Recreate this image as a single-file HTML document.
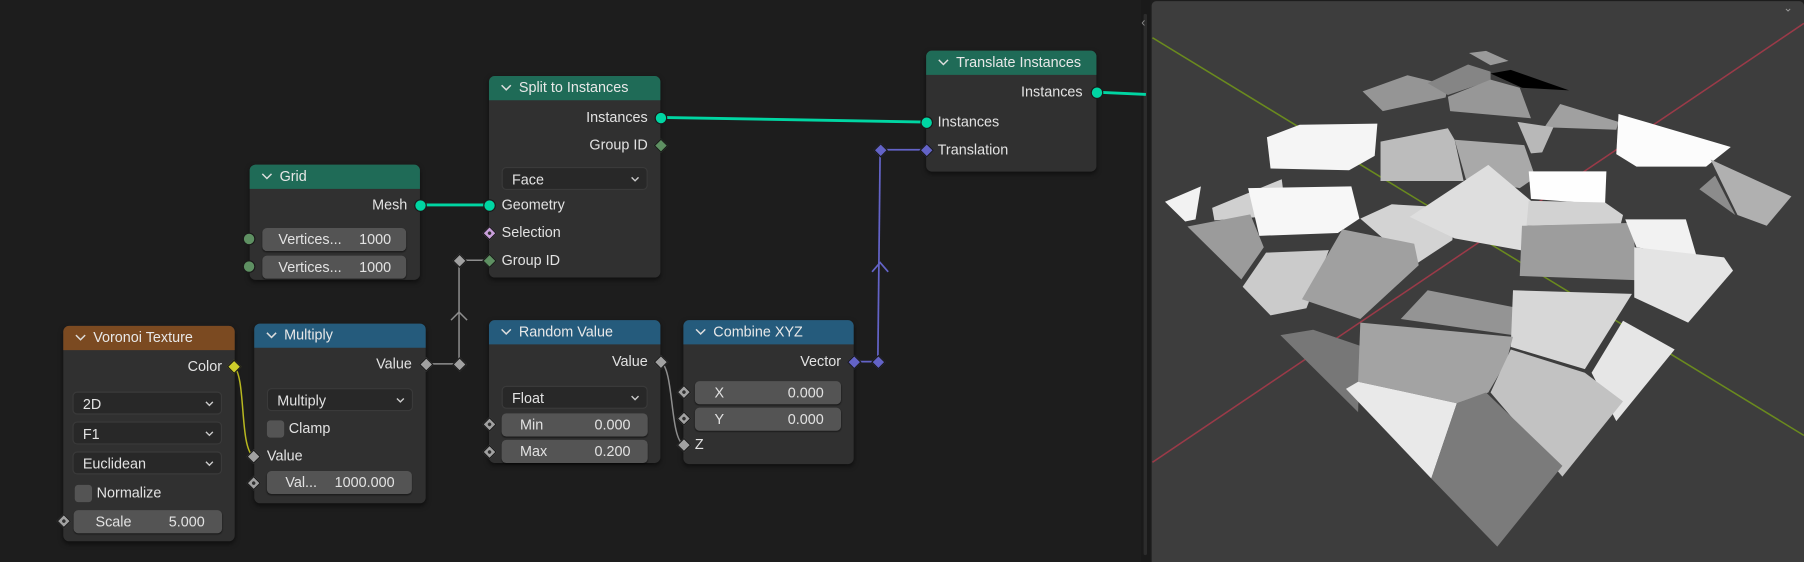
<!DOCTYPE html>
<html><head><meta charset="utf-8">
<style>
html,body{margin:0;padding:0;width:1804px;height:562px;overflow:hidden;background:#1d1d1d;}
#s{position:absolute;left:0;top:0;width:1568px;height:488px;transform:scale(1.1505,1.1516);transform-origin:0 0;font-family:"Liberation Sans",sans-serif;color:#e2e2e2;font-size:12.5px;}
.a{position:absolute;}
.node{position:absolute;background:#303030;border-radius:5px;box-shadow:0 2px 4px rgba(0,0,0,.5);}
.hdr{position:absolute;left:0;right:0;top:0;height:21px;border-radius:5px 5px 0 0;line-height:21px;padding-left:26px;font-size:12.5px;color:#e8e8e8;}
.hdr svg{position:absolute;left:10px;top:7px;}
.g{background:#1f6b57}.b{background:#255b7c}.o{background:#7b4a21}
.lab{position:absolute;height:16px;line-height:16px;white-space:nowrap;}
.r{text-align:right}
.fld{position:absolute;height:20px;line-height:20px;background:#545454;border-radius:4px;box-shadow:0 1px 1px rgba(0,0,0,.4);}
.fld span{position:absolute;top:0}
.dd{position:absolute;height:20px;line-height:20px;background:#282828;border:1px solid #3a3a3a;border-radius:4px;box-sizing:border-box;padding-left:8px;}
.dd svg{position:absolute;right:6px;top:7px;}
.cb{position:absolute;width:15px;height:15px;background:#545454;border-radius:3px;}
.sc{position:absolute;width:9px;height:9px;border-radius:50%;background:#00d6a3;border:1px solid #1a1a1a;margin:-5.5px 0 0 -5.5px;}
.dm{position:absolute;width:7px;height:7px;transform:rotate(45deg);margin:-4.5px 0 0 -4.5px;border:1px solid #1a1a1a;}
.dm.u::after{content:"";position:absolute;left:2px;top:2px;width:3px;height:3px;background:#303030;border-radius:50%;}
</style></head><body>
<div id="s">
<!-- viewport -->
<div class="a" style="left:992px;top:0;width:8px;height:488px;background:#1a1a1a"></div>
<div class="a" style="left:994px;top:12px;width:3px;height:470px;background:#2c2c2c;border-radius:2px"></div>
<div class="a" style="left:992px;top:14px;color:#888;font-size:11px">‹</div>
<div class="a" style="left:1001px;top:1px;width:567px;height:487px;background:#3d3d3d;border-radius:4px 4px 0 0"></div>
<svg class="a" style="left:956px;top:0" width="612" height="488" viewBox="0 0 1568 1568" preserveAspectRatio="none">
<line x1="117" y1="105" x2="1568" y2="1215" stroke="#6a8a1e" stroke-width="4"/>
<line x1="1568" y1="65" x2="117" y2="1290" stroke="#9a3a48" stroke-width="4"/>
<g stroke="none">
<polygon points="822,148 860,142 910,170 870,182" fill="#9a9a9a"/>
<polygon points="870,205 915,195 1045,252 940,245" fill="#000"/>
<polygon points="585,255 685,210 775,238 770,272 630,310" fill="#959595"/>
<polygon points="730,232 820,180 870,200 870,225 775,265" fill="#858585"/>
<polygon points="775,270 870,222 935,245 960,330 780,310" fill="#979797"/>
<polygon points="990,355 1025,290 1155,340 1150,362" fill="#a0a0a0"/>
<polygon points="930,340 1010,355 985,425 960,428" fill="#b8b8b8"/>
<polygon points="372,383 445,348 618,345 612,435 555,475 380,470" fill="#f5f5f5"/>
<polygon points="625,395 775,358 790,390 810,505 625,505" fill="#bcbcbc"/>
<polygon points="790,390 945,405 970,495 935,525 815,500" fill="#a9a9a9"/>
<polygon points="1155,318 1405,410 1350,465 1195,465 1150,430" fill="#fcfcfc"/>
<polygon points="1360,445 1540,548 1485,630 1420,600" fill="#b0b0b0"/>
<polygon points="1335,528 1370,490 1415,600" fill="#8c8c8c"/>
<polygon points="145,563 225,520 213,612 190,618" fill="#f2f2f2"/>
<polygon points="250,580 405,500 415,600 255,615" fill="#d0d0d0"/>
<polygon points="330,525 560,520 578,610 530,650 355,658" fill="#f7f7f7"/>
<polygon points="195,632 335,598 365,690 315,780" fill="#9b9b9b"/>
<polygon points="318,800 370,705 510,698 460,860 380,880" fill="#cbcbcb"/>
<polygon points="580,610 650,570 790,580 785,670 700,740" fill="#d3d3d3"/>
<polygon points="450,835 540,640 700,680 710,740 580,890" fill="#a0a0a0"/>
<polygon points="690,605 865,460 960,560 945,700 790,665" fill="#dedede"/>
<polygon points="955,478 1128,478 1125,570 960,555" fill="#fefefe"/>
<polygon points="955,560 1125,565 1165,600 1160,625 950,630" fill="#d2d2d2"/>
<polygon points="940,630 1185,622 1200,782 935,770" fill="#9d9d9d"/>
<polygon points="1170,612 1305,612 1330,720 1195,690" fill="#f2f2f2"/>
<polygon points="1190,690 1390,718 1410,755 1310,900 1190,830" fill="#e4e4e4"/>
<polygon points="670,890 730,810 925,858 920,935" fill="#949494"/>
<polygon points="920,810 1185,820 1080,1030 915,968" fill="#d7d7d7"/>
<polygon points="1095,1040 1165,895 1280,975 1150,1175" fill="#e6e6e6"/>
<polygon points="402,935 475,920 580,965 575,1150" fill="#777"/>
<polygon points="575,1065 580,900 920,940 905,1010 865,1095 795,1125" fill="#a3a3a3"/>
<polygon points="870,1095 915,975 1080,1040 1165,1120 1030,1330" fill="#c2c2c2"/>
<polygon points="548,1085 575,1065 795,1125 738,1335" fill="#e9e9e9"/>
<polygon points="738,1335 795,1125 860,1095 1030,1300 885,1525" fill="#7b7b7b"/>
</g>
</svg>
<div class="a" style="left:1550px;top:2px;color:#999;font-size:10px">⌄</div>

<!-- links -->
<svg class="a" style="left:0;top:0" width="1000" height="488">
<g fill="none" stroke-width="2.5" stroke="#00d6a3">
<line x1="365" y1="178" x2="425" y2="178"/>
<line x1="574" y1="102" x2="805" y2="106"/>
<line x1="953" y1="80" x2="996" y2="82"/>
</g>
<g fill="none" stroke="#8e8e8e" stroke-width="1.3">
<line x1="399" y1="226" x2="425" y2="226"/>
<line x1="399" y1="226" x2="399" y2="316"/>
<line x1="370" y1="316" x2="399" y2="316"/>
<polyline points="392,278 399,271 406,278"/>
<path d="M574,314 C586,320 582,380 594,386"/>
</g>
<path d="M203,318 C214,326 208,388 220,396" fill="none" stroke="#b8b820" stroke-width="1.3"/>
<g fill="none" stroke="#6363c7" stroke-width="1.5">
<line x1="742" y1="314" x2="763" y2="314"/>
<line x1="763" y1="314" x2="765" y2="130"/>
<line x1="765" y1="130" x2="805" y2="130"/>
<polyline points="758,236 765,228 772,236"/>
</g>
</svg>

<!-- Split to Instances -->
<div class="node" style="left:425px;top:66px;width:149px;height:175px"><div class="hdr g"><svg width="10" height="7"><path d="M1 1L5 5L9 1" stroke="#ddd" stroke-width="1.3" fill="none"/></svg>Split to Instances</div></div>
<div class="lab r" style="left:440px;width:123px;top:94px">Instances</div>
<div class="lab r" style="left:440px;width:123px;top:118px">Group ID</div>
<div class="dd" style="left:436px;top:145px;width:127px">Face<svg width="8" height="6"><path d="M1 1L4 4L7 1" stroke="#ccc" stroke-width="1.2" fill="none"/></svg></div>
<div class="lab" style="left:436px;top:170px">Geometry</div>
<div class="lab" style="left:436px;top:194px">Selection</div>
<div class="lab" style="left:436px;top:218px">Group ID</div>

<!-- Grid -->
<div class="node" style="left:217px;top:143px;width:148px;height:100px"><div class="hdr g"><svg width="10" height="7"><path d="M1 1L5 5L9 1" stroke="#ddd" stroke-width="1.3" fill="none"/></svg>Grid</div></div>
<div class="lab r" style="left:230px;width:124px;top:170px">Mesh</div>
<div class="fld" style="left:228px;top:198px;width:125px"><span style="left:14px">Vertices...</span><span style="right:13px">1000</span></div>
<div class="fld" style="left:228px;top:222px;width:125px"><span style="left:14px">Vertices...</span><span style="right:13px">1000</span></div>

<!-- Voronoi -->
<div class="node" style="left:55px;top:283px;width:149px;height:187px"><div class="hdr o"><svg width="10" height="7"><path d="M1 1L5 5L9 1" stroke="#ddd" stroke-width="1.3" fill="none"/></svg>Voronoi Texture</div></div>
<div class="lab r" style="left:70px;width:123px;top:310px">Color</div>
<div class="dd" style="left:63px;top:340px;width:130px">2D<svg width="8" height="6"><path d="M1 1L4 4L7 1" stroke="#ccc" stroke-width="1.2" fill="none"/></svg></div>
<div class="dd" style="left:63px;top:366px;width:130px">F1<svg width="8" height="6"><path d="M1 1L4 4L7 1" stroke="#ccc" stroke-width="1.2" fill="none"/></svg></div>
<div class="dd" style="left:63px;top:392px;width:130px">Euclidean<svg width="8" height="6"><path d="M1 1L4 4L7 1" stroke="#ccc" stroke-width="1.2" fill="none"/></svg></div>
<div class="cb" style="left:65px;top:421px"></div>
<div class="lab" style="left:84px;top:420px">Normalize</div>
<div class="fld" style="left:64px;top:443px;width:129px"><span style="left:19px">Scale</span><span style="right:15px">5.000</span></div>

<!-- Multiply -->
<div class="node" style="left:221px;top:281px;width:149px;height:156px"><div class="hdr b"><svg width="10" height="7"><path d="M1 1L5 5L9 1" stroke="#ddd" stroke-width="1.3" fill="none"/></svg>Multiply</div></div>
<div class="lab r" style="left:235px;width:123px;top:308px">Value</div>
<div class="dd" style="left:232px;top:337px;width:127px">Multiply<svg width="8" height="6"><path d="M1 1L4 4L7 1" stroke="#ccc" stroke-width="1.2" fill="none"/></svg></div>
<div class="cb" style="left:232px;top:365px"></div>
<div class="lab" style="left:251px;top:364px">Clamp</div>
<div class="lab" style="left:232px;top:388px">Value</div>
<div class="fld" style="left:232px;top:409px;width:126px"><span style="left:16px">Val...</span><span style="right:15px">1000.000</span></div>

<!-- Random Value -->
<div class="node" style="left:425px;top:278px;width:149px;height:124px"><div class="hdr b"><svg width="10" height="7"><path d="M1 1L5 5L9 1" stroke="#ddd" stroke-width="1.3" fill="none"/></svg>Random Value</div></div>
<div class="lab r" style="left:440px;width:123px;top:306px">Value</div>
<div class="dd" style="left:436px;top:335px;width:127px">Float<svg width="8" height="6"><path d="M1 1L4 4L7 1" stroke="#ccc" stroke-width="1.2" fill="none"/></svg></div>
<div class="fld" style="left:436px;top:359px;width:127px"><span style="left:16px">Min</span><span style="right:15px">0.000</span></div>
<div class="fld" style="left:436px;top:382px;width:127px"><span style="left:16px">Max</span><span style="right:15px">0.200</span></div>

<!-- Combine XYZ -->
<div class="node" style="left:594px;top:278px;width:148px;height:125px"><div class="hdr b"><svg width="10" height="7"><path d="M1 1L5 5L9 1" stroke="#ddd" stroke-width="1.3" fill="none"/></svg>Combine XYZ</div></div>
<div class="lab r" style="left:608px;width:123px;top:306px">Vector</div>
<div class="fld" style="left:604px;top:331px;width:127px"><span style="left:17px">X</span><span style="right:15px">0.000</span></div>
<div class="fld" style="left:604px;top:354px;width:127px"><span style="left:17px">Y</span><span style="right:15px">0.000</span></div>
<div class="lab" style="left:604px;top:378px">Z</div>

<!-- Translate Instances -->
<div class="node" style="left:805px;top:44px;width:148px;height:105px"><div class="hdr g"><svg width="10" height="7"><path d="M1 1L5 5L9 1" stroke="#ddd" stroke-width="1.3" fill="none"/></svg>Translate Instances</div></div>
<div class="lab r" style="left:818px;width:123px;top:72px">Instances</div>
<div class="lab" style="left:815px;top:98px">Instances</div>
<div class="lab" style="left:815px;top:122px">Translation</div>

<!-- sockets -->
<div class="sc" style="left:574px;top:102px"></div>
<div class="dm" style="left:574px;top:126px;background:#5e9062"></div>
<div class="sc" style="left:425px;top:178px"></div>
<div class="dm u" style="left:425px;top:202px;background:#c99fdb"></div>
<div class="dm" style="left:425px;top:226px;background:#5e9062"></div>
<div class="sc" style="left:365px;top:178px"></div>
<div class="sc" style="left:216px;top:207px;background:#5e9062"></div>
<div class="sc" style="left:216px;top:231px;background:#5e9062"></div>
<div class="dm" style="left:203px;top:318px;background:#cdcd2a"></div>
<div class="dm u" style="left:55px;top:452px;background:#a1a1a1"></div>
<div class="dm" style="left:370px;top:316px;background:#a1a1a1"></div>
<div class="dm" style="left:220px;top:396px;background:#a1a1a1"></div>
<div class="dm u" style="left:220px;top:419px;background:#a1a1a1"></div>
<div class="dm" style="left:399px;top:226px;background:#a1a1a1"></div>
<div class="dm" style="left:399px;top:316px;background:#a1a1a1"></div>
<div class="dm" style="left:574px;top:314px;background:#a1a1a1"></div>
<div class="dm u" style="left:425px;top:368px;background:#a1a1a1"></div>
<div class="dm u" style="left:425px;top:392px;background:#a1a1a1"></div>
<div class="dm u" style="left:594px;top:340px;background:#a1a1a1"></div>
<div class="dm u" style="left:594px;top:363px;background:#a1a1a1"></div>
<div class="dm" style="left:594px;top:386px;background:#a1a1a1"></div>
<div class="dm" style="left:742px;top:314px;background:#6363c7"></div>
<div class="dm" style="left:763px;top:314px;background:#6363c7"></div>
<div class="dm" style="left:765px;top:130px;background:#6363c7"></div>
<div class="dm" style="left:805px;top:130px;background:#6363c7"></div>
<div class="sc" style="left:805px;top:106px"></div>
<div class="sc" style="left:953px;top:80px"></div>
</div>
</body></html>
